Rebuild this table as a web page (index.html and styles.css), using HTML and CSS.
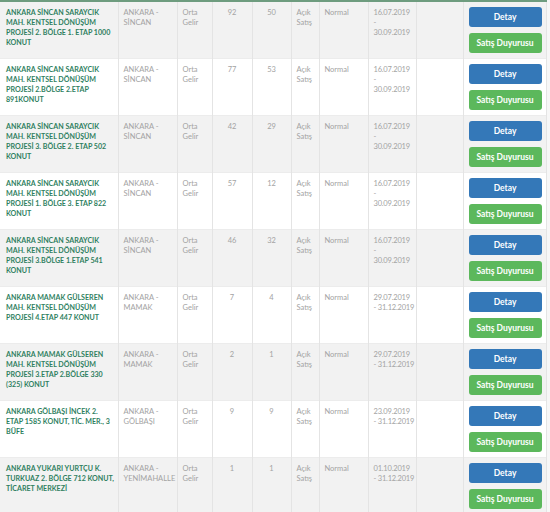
FILE: index.html
```html
<!DOCTYPE html>
<html lang="tr">
<head>
<meta charset="utf-8">
<link rel="stylesheet" href="styles.css">
</head>
<body>
<table class="list">
  <colgroup>
    <col class="c-name"><col class="c-loc"><col class="c-type"><col class="c-n1"><col class="c-n2">
    <col class="c-sale"><col class="c-norm"><col class="c-date"><col class="c-empty"><col class="c-act">
  </colgroup>
  <tbody>
    <tr>
      <td class="name">ANKARA SİNCAN SARAYCIK<br>MAH. KENTSEL DÖNÜŞÜM<br>PROJESİ 2. BÖLGE 1. ETAP 1000<br>KONUT</td>
      <td>ANKARA -<br>SİNCAN</td><td>Orta<br>Gelir</td><td class="num">92</td><td class="num">50</td>
      <td>Açık<br>Satış</td><td>Normal</td><td class="date">16.07.2019<br>-<br>30.09.2019</td><td></td>
      <td class="act"><button class="btn btn-blue">Detay</button><button class="btn btn-green">Satış Duyurusu</button></td>
    </tr>
    <tr>
      <td class="name">ANKARA SİNCAN SARAYCIK<br>MAH. KENTSEL DÖNÜŞÜM<br>PROJESİ 2.BÖLGE 2.ETAP<br>891KONUT</td>
      <td>ANKARA -<br>SİNCAN</td><td>Orta<br>Gelir</td><td class="num">77</td><td class="num">53</td>
      <td>Açık<br>Satış</td><td>Normal</td><td class="date">16.07.2019<br>-<br>30.09.2019</td><td></td>
      <td class="act"><button class="btn btn-blue">Detay</button><button class="btn btn-green">Satış Duyurusu</button></td>
    </tr>
    <tr>
      <td class="name">ANKARA SİNCAN SARAYCIK<br>MAH. KENTSEL DÖNÜŞÜM<br>PROJESİ 3. BÖLGE 2. ETAP 502<br>KONUT</td>
      <td>ANKARA -<br>SİNCAN</td><td>Orta<br>Gelir</td><td class="num">42</td><td class="num">29</td>
      <td>Açık<br>Satış</td><td>Normal</td><td class="date">16.07.2019<br>-<br>30.09.2019</td><td></td>
      <td class="act"><button class="btn btn-blue">Detay</button><button class="btn btn-green">Satış Duyurusu</button></td>
    </tr>
    <tr>
      <td class="name">ANKARA SİNCAN SARAYCIK<br>MAH. KENTSEL DÖNÜŞÜM<br>PROJESİ 1. BÖLGE 3. ETAP 822<br>KONUT</td>
      <td>ANKARA -<br>SİNCAN</td><td>Orta<br>Gelir</td><td class="num">57</td><td class="num">12</td>
      <td>Açık<br>Satış</td><td>Normal</td><td class="date">16.07.2019<br>-<br>30.09.2019</td><td></td>
      <td class="act"><button class="btn btn-blue">Detay</button><button class="btn btn-green">Satış Duyurusu</button></td>
    </tr>
    <tr>
      <td class="name">ANKARA SİNCAN SARAYCIK<br>MAH. KENTSEL DÖNÜŞÜM<br>PROJESİ 3.BÖLGE 1.ETAP 541<br>KONUT</td>
      <td>ANKARA -<br>SİNCAN</td><td>Orta<br>Gelir</td><td class="num">46</td><td class="num">32</td>
      <td>Açık<br>Satış</td><td>Normal</td><td class="date">16.07.2019<br>-<br>30.09.2019</td><td></td>
      <td class="act"><button class="btn btn-blue">Detay</button><button class="btn btn-green">Satış Duyurusu</button></td>
    </tr>
    <tr>
      <td class="name">ANKARA MAMAK GÜLSEREN<br>MAH. KENTSEL DÖNÜŞÜM<br>PROJESİ 4.ETAP 447 KONUT</td>
      <td>ANKARA -<br>MAMAK</td><td>Orta<br>Gelir</td><td class="num">7</td><td class="num">4</td>
      <td>Açık<br>Satış</td><td>Normal</td><td class="date">29.07.2019<br>- 31.12.2019</td><td></td>
      <td class="act"><button class="btn btn-blue">Detay</button><button class="btn btn-green">Satış Duyurusu</button></td>
    </tr>
    <tr>
      <td class="name">ANKARA MAMAK GÜLSEREN<br>MAH. KENTSEL DÖNÜŞÜM<br>PROJESİ 3.ETAP 2.BÖLGE 330<br>(325) KONUT</td>
      <td>ANKARA -<br>MAMAK</td><td>Orta<br>Gelir</td><td class="num">2</td><td class="num">1</td>
      <td>Açık<br>Satış</td><td>Normal</td><td class="date">29.07.2019<br>- 31.12.2019</td><td></td>
      <td class="act"><button class="btn btn-blue">Detay</button><button class="btn btn-green">Satış Duyurusu</button></td>
    </tr>
    <tr>
      <td class="name">ANKARA GÖLBAŞI İNCEK 2.<br>ETAP 1585 KONUT, TİC. MER., 3<br>BÜFE</td>
      <td>ANKARA -<br>GÖLBAŞI</td><td>Orta<br>Gelir</td><td class="num">9</td><td class="num">9</td>
      <td>Açık<br>Satış</td><td>Normal</td><td class="date">23.09.2019<br>- 31.12.2019</td><td></td>
      <td class="act"><button class="btn btn-blue">Detay</button><button class="btn btn-green">Satış Duyurusu</button></td>
    </tr>
    <tr>
      <td class="name">ANKARA YUKARI YURTÇU K.<br>TURKUAZ 2. BÖLGE 712 KONUT,<br>TİCARET MERKEZİ</td>
      <td>ANKARA -<br>YENİMAHALLE</td><td>Orta<br>Gelir</td><td class="num">1</td><td class="num">1</td>
      <td>Açık<br>Satış</td><td>Normal</td><td class="date">01.10.2019<br>- 31.12.2019</td><td></td>
      <td class="act"><button class="btn btn-blue">Detay</button><button class="btn btn-green">Satış Duyurusu</button></td>
    </tr>
  </tbody>
</table>
</body>
</html>
```

FILE: styles.css
```css
html, body {
  margin: 0;
  padding: 0;
  background: #f7f7f7;
}
body {
  font-family: Lato, "Open Sans", sans-serif;
  font-size: 7.5px;
  color: #a3a3a3;
}
.list {
  width: 546px;
  table-layout: fixed;
  border-collapse: collapse;
  border-top: 2px solid #6e9c7f;
}
.c-name { width: 118px; }
.c-loc { width: 59px; }
.c-type { width: 35px; }
.c-n1 { width: 40px; }
.c-n2 { width: 39px; }
.c-sale { width: 28px; }
.c-norm { width: 49px; }
.c-date { width: 48px; }
.c-empty { width: 47px; }
.c-act { width: 83px; }

.list tr { height: 57px; }
.list tr:nth-child(odd) { background: #f2f2f2; }
.list tr:nth-child(even) { background: #ffffff; }
.list td {
  vertical-align: top;
  padding: 6px 5px 5px 5px;
  line-height: 10px;
  white-space: nowrap;
  border-left: 1px solid #e4e4e4;
  border-right: 1px solid #e4e4e4;
  border-top: 1px solid #ececec;
}
.list td:first-child { border-left: none; }
.list td.name {
  padding-left: 6px;
  color: #2f7f5f;
  font-weight: 700;
  font-size: 7.1px;
}
.list td.date { letter-spacing: -0.2px; }
.list td.num { text-align: center; }
.list td.act {
  padding: 5px 5px 4px 5px;
}
.btn {
  display: block;
  width: 73px;
  height: 20px;
  margin: 0;
  padding: 0;
  border: none;
  border-radius: 3px;
  color: #fff;
  font-family: Lato, "Open Sans", sans-serif;
  font-size: 8.5px;
  font-weight: 700;
  line-height: 20px;
  text-align: center;
}
.btn + .btn { margin-top: 6px; }
.btn-blue { background: #3478b8; }
.btn-green { background: #5cb85c; }
```
